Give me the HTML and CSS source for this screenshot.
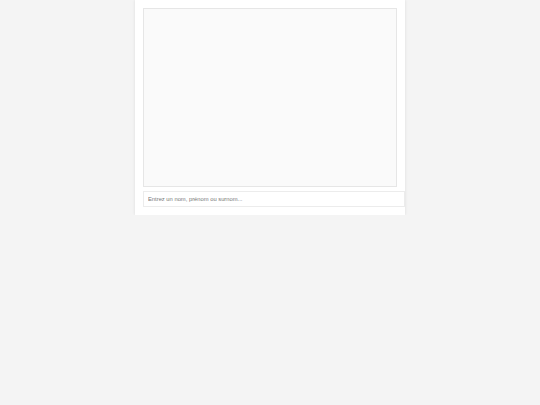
FILE: index.html
```html
<!DOCTYPE html>
<html>
<head>
<meta charset="utf-8">
<link rel="stylesheet" href="styles.css">
</head>
<body>
<div class="panel">
  <div class="messages"></div>
  <input class="search" type="text" placeholder="Entrez un nom, prénom ou surnom...">
</div>
</body>
</html>
```
FILE: styles.css
```css
html, body {
  margin: 0;
  padding: 0;
  background: #f4f4f4;
  font-family: "Liberation Sans", Arial, sans-serif;
}
.panel {
  width: 254px;
  margin-left: 135px;
  padding: 8px 8px 8px 8px;
  background: #ffffff;
  box-shadow: 0 0 3px rgba(0,0,0,0.1);
}
.messages {
  height: 177px;
  background: #fafafa;
  border: 1px solid #e6e6e6;
}
.search {
  display: block;
  box-sizing: border-box;
  width: 262px;
  height: 16px;
  margin: 4px 0 0 0;
  padding: 0 4px;
  border: 1px solid #ececec;
  background: #fff;
  font-family: "Liberation Sans", Arial, sans-serif;
  font-size: 5.8px;
  color: #555;
  outline: none;
}
.search::placeholder {
  color: #777;
}
```
